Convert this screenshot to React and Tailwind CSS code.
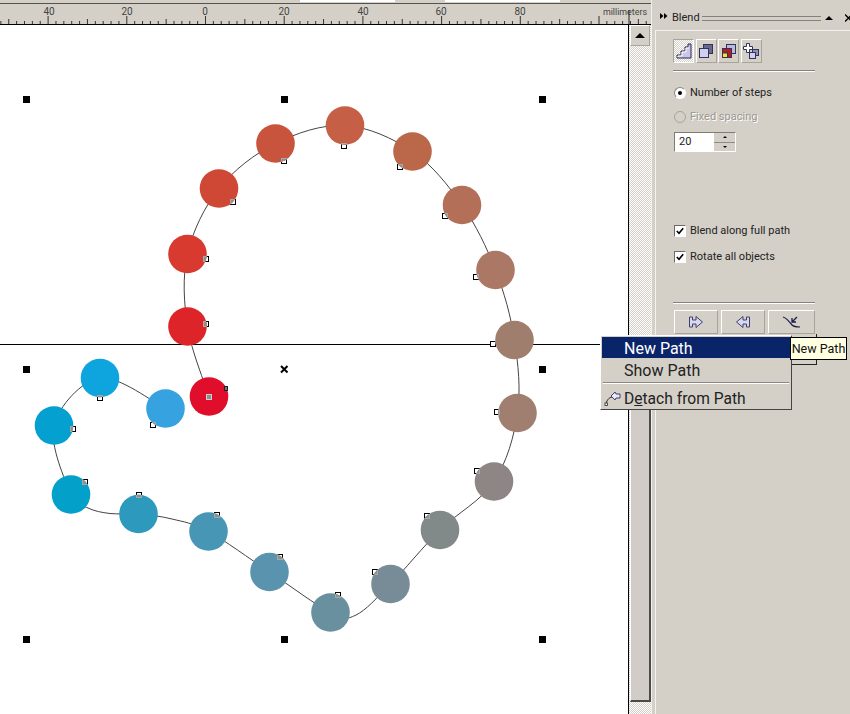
import React from "react";

const blobs = [
  { c: [209, 396.5], f: "#e00d2b", h: [[209, 397, 1]] },
  { c: [187.5, 326.5], f: "#dd2429", h: [[206, 324]] },
  { c: [187.5, 254], f: "#d83a30", h: [[206, 259]] },
  { c: [219, 188.5], f: "#cf4735", h: [[233, 202]] },
  { c: [275.5, 143.5], f: "#c9543e", h: [[284, 161]] },
  { c: [345, 125.5], f: "#c55f45", h: [[344, 146]] },
  { c: [412.5, 151.5], f: "#ba674a", h: [[400, 167]] },
  { c: [462, 205], f: "#b36f57", h: [[445, 216]] },
  { c: [495.5, 270], f: "#aa7864", h: [[476, 277]] },
  { c: [514.5, 340], f: "#a07e6e", h: [[493, 344]] },
  { c: [517.5, 413], f: "#a07f70", h: [[497, 412]] },
  { c: [494, 481.5], f: "#8e8585", h: [[477, 471]] },
  { c: [440, 530], f: "#828a89", h: [[427, 516]] },
  { c: [390.5, 584], f: "#778c97", h: [[375, 572]] },
  { c: [330.5, 612.5], f: "#69909f", h: [[338, 595]] },
  { c: [269.5, 572], f: "#5a93ad", h: [[280, 557]] },
  { c: [208.5, 531.5], f: "#4896b6", h: [[217, 515]] },
  { c: [138.5, 514], f: "#2d99bd", h: [[139, 495]] },
  { c: [71, 494.5], f: "#03a0c9", h: [[85, 482]] },
  { c: [54, 425.5], f: "#04a0d0", h: [[73, 429]] },
  { c: [100, 378], f: "#0ea5df", h: [[100, 398]] },
  { c: [165.5, 408.5], f: "#36a2df", h: [[153, 425]] },
];

const route = [
  [209, 396.5], [187.5, 326.5], [187.5, 254], [219, 188.5], [275.5, 143.5], [345, 125.5],
  [412.5, 151.5], [462, 205], [495.5, 270], [514.5, 340], [517.5, 413], [494, 481.5],
  [440, 530], [390.5, 584], [356, 615], [330.5, 612.5], [269.5, 572], [208.5, 531.5],
  [172, 519], [138.5, 514], [110, 513.5], [88, 508], [71, 494.5], [54, 425.5], [100, 378], [165.5, 408.5],
];

function smoothPath(pts) {
  let d = `M${pts[0][0]} ${pts[0][1]}`;
  for (let i = 0; i < pts.length - 1; i++) {
    const p0 = pts[Math.max(i - 1, 0)];
    const p1 = pts[i];
    const p2 = pts[i + 1];
    const p3 = pts[Math.min(i + 2, pts.length - 1)];
    const c1 = [p1[0] + (p2[0] - p0[0]) / 6, p1[1] + (p2[1] - p0[1]) / 6];
    const c2 = [p2[0] - (p3[0] - p1[0]) / 6, p2[1] - (p3[1] - p1[1]) / 6];
    d += ` C${c1[0]} ${c1[1]} ${c2[0]} ${c2[1]} ${p2[0]} ${p2[1]}`;
  }
  return d;
}

const corners = [
  [26, 99], [284, 99], [542, 99],
  [26, 369], [542, 369],
  [26, 639], [284, 639], [542, 639],
];

function Canvas() {
  return (
    <svg className="block" width="628" height="689" viewBox="0 25 628 689">
      <line x1="0" y1="344.5" x2="628" y2="344.5" stroke="#000" strokeWidth="1" />
      <path d={smoothPath(route)} fill="none" stroke="#444" strokeWidth="1" />
      {blobs.flatMap((b, i) =>
        b.h.map((h, j) => (
          <rect key={`u${i}${j}`} x={h[0] - 2.5} y={h[1] - 2.5} width="5" height="5" fill="#fff" stroke="#000" strokeWidth="1" />
        ))
      )}
      {blobs.map((b, i) => (
        <g key={i}>
          <clipPath id={`cp${i}`}>
            <circle cx={b.c[0]} cy={b.c[1]} r="19.3" />
          </clipPath>
          <circle cx={b.c[0]} cy={b.c[1]} r="19.3" fill={b.f} />
          {b.h.map((h, j) => (
            <rect
              key={j}
              x={h[0] - 2.5}
              y={h[1] - 2.5}
              width="5"
              height="5"
              fill="#8f8f8f"
              stroke={h[2] ? "#cfcfcf" : "#a8a8a8"}
              strokeWidth="1"
              clipPath={`url(#cp${i})`}
            />
          ))}
        </g>
      ))}
      <rect x="224.5" y="386.5" width="3" height="4" fill="#777" stroke="#222" strokeWidth="1" />
      {corners.map((p, i) => (
        <rect key={i} x={p[0] - 3} y={p[1] - 3} width="7" height="7" fill="#000" />
      ))}
      <path d="M281 366 L287.5 372.5 M287.5 366 L281 372.5" stroke="#000" strokeWidth="2" />
    </svg>
  );
}

function Ruler() {
  const ticks = [];
  for (let k = -26; k <= 56; k++) {
    const x = 205.5 + k * 7.87;
    const h = k % 10 === 0 ? 8 : k % 5 === 0 ? 5 : 3;
    ticks.push(<line key={k} x1={x} x2={x} y1={24 - h} y2="24" stroke="#333" strokeWidth="1" />);
  }
  const labels = [[49, "40"], [127, "20"], [205, "0"], [284, "20"], [363, "40"], [441, "60"], [520, "80"]];
  return (
    <svg className="block" width="651" height="20" viewBox="0 4 651 20">
      {ticks}
      {labels.map(([x, t]) => (
        <text key={x} x={x} y="15" textAnchor="middle" fontSize="10" fill="#444" fontFamily="Roboto,sans-serif">{t}</text>
      ))}
      <text x="647" y="15" textAnchor="end" fontSize="8.9" fill="#444" fontFamily="Roboto,sans-serif">millimeters</text>
      <line x1="629" x2="629" y1="10" y2="24" stroke="#222" />
    </svg>
  );
}

const raised = "border border-t-white border-l-white border-r-[#a8a49c] border-b-[#a8a49c]";

function StepsIcon() {
  return (
    <svg width="16" height="16" viewBox="0 0 16 16">
      <path d="M1 15 V12 H5 V8 H9 V4 H12 V1 H15 V15 Z" fill="#c9c6e6" stroke="#2b2b4f" strokeWidth="1" />
      <path d="M2 14 V13 H6 V9 H10 V5 H13" fill="none" stroke="#fff" strokeWidth="1" />
    </svg>
  );
}
function BackIcon() {
  return (
    <svg width="16" height="16" viewBox="0 0 16 16">
      <rect x="5.5" y="1.5" width="9" height="9" fill="#66668e" stroke="#33335a" />
      <rect x="1.5" y="5.5" width="9" height="9" fill="#cfcff2" stroke="#33335a" />
    </svg>
  );
}
function ColorIcon() {
  return (
    <svg width="16" height="16" viewBox="0 0 16 16">
      <rect x="5.5" y="1.5" width="9" height="9" fill="#b9b9dd" stroke="#33335a" />
      <rect x="1.5" y="5.5" width="9" height="9" fill="#b01c20" stroke="#33335a" />
      <rect x="1.5" y="10" width="5" height="4.5" fill="#f4e32a" stroke="#33335a" />
    </svg>
  );
}
function SplitIcon() {
  return (
    <svg width="18" height="18" viewBox="0 0 18 18">
      <path d="M4.5 1.5 H7.5 V4.5 H10.5 V7.5 H7.5 V10.5 H4.5 V7.5 H1.5 V4.5 H4.5 Z" fill="#fff" stroke="#33335a" />
      <rect x="10.5" y="7.5" width="6" height="6" fill="#8f8fb8" stroke="#33335a" />
      <rect x="7.5" y="10.5" width="6" height="6" fill="#cfcff2" stroke="#33335a" />
    </svg>
  );
}
function ArrowStart() {
  return (
    <svg width="16" height="14" viewBox="0 0 16 14">
      <path d="M1.5 2 H4.5 V5 H8 V1.5 L14.5 7 L8 12.5 V9 H4.5 V12 H1.5 Z" fill="#d8d8f2" stroke="#3f3f6e" />
    </svg>
  );
}
function ArrowEnd() {
  return (
    <svg width="16" height="14" viewBox="0 0 16 14">
      <path d="M14.5 2 H11.5 V5 H8 V1.5 L1.5 7 L8 12.5 V9 H11.5 V12 H14.5 Z" fill="#d8d8f2" stroke="#3f3f6e" />
    </svg>
  );
}
function PathArrow() {
  return (
    <svg width="20" height="14" viewBox="0 0 20 14">
      <path d="M1 2 C5 3 7 7 10 10 C12 12 15 12 18 12" fill="none" stroke="#1c1c4a" strokeWidth="1.2" />
      <path d="M15 2 L10 7 M10 3 V7 H14" fill="none" stroke="#1c1c4a" strokeWidth="1.3" />
    </svg>
  );
}
function DetachIcon() {
  return (
    <svg width="18" height="18" viewBox="0 0 18 18">
      <path d="M2 15 C3 10 6 8 9 8" fill="none" stroke="#222" strokeWidth="1" />
      <rect x="1" y="14" width="2.5" height="2.5" fill="#fff" stroke="#222" strokeWidth="0.8" />
      <path d="M7 7 L11 3 L12 5 H16 V9 H12 L11 11 Z" fill="#e9e9f7" stroke="#3f3f6e" strokeWidth="1" />
    </svg>
  );
}

function Radio({ on, disabled }) {
  return (
    <span className={`w-[12px] h-[12px] rounded-full border flex items-center justify-center ${disabled ? "border-[#a8a49c] bg-[#d4d0c8]" : "border-t-[#8a877f] border-l-[#8a877f] border-r-white border-b-white bg-white"}`}>
      {on && <span className="w-[4px] h-[4px] rounded-full bg-black" />}
    </span>
  );
}

function Check() {
  return (
    <span className="w-[12px] h-[12px] bg-white border border-t-[#6e6b64] border-l-[#6e6b64] border-r-white border-b-white flex items-center justify-center">
      <svg width="8" height="8" viewBox="0 0 8 8">
        <path d="M0.8 4 L3 6.3 L7.2 1.2" fill="none" stroke="#000" strokeWidth="1.6" />
      </svg>
    </span>
  );
}

const hatch = "bg-[repeating-conic-gradient(#d4d0c8_0_25%,#fff_0_50%)] bg-[length:2px_2px]";

export default function App() {
  return (
    <div className="relative w-[850px] h-[714px] overflow-hidden flex bg-[#d4d0c8] text-[11px] text-[#222] font-['Roboto',sans-serif]">
      <div className="w-[651px] h-full flex flex-col shrink-0">
        <div className="h-[4px] bg-[#d4d0c8] border-b border-[#55534e] flex">
          <div className="ml-[300px] w-[95px] h-[2px] bg-white" />
          <div className="ml-[50px] w-[115px] h-[2px] bg-white" />
        </div>
        <div className="h-[20px] bg-[#d4d0c8]">
          <Ruler />
        </div>
        <div className="flex-1 min-h-0 flex border-t border-black">
          <div className="w-[628px] bg-white h-full">
            <Canvas />
          </div>
          <div className={`w-[23px] h-full flex flex-col border-l border-black ${hatch}`}>
            <div className={`ml-[1px] w-[20px] h-[21px] bg-[#d4d0c8] flex items-center justify-center ${raised}`}>
              <span className="w-0 h-0 border-l-[5px] border-r-[5px] border-b-[5px] border-l-transparent border-r-transparent border-b-black" />
            </div>
            <div className="h-[315px]" />
            <div className="ml-[1px] w-[21px] h-[341px] bg-[#d1ccc7] border-l border-white border-r-2 border-b-2 border-r-[#4c4a46] border-b-[#4c4a46]" />
          </div>
        </div>
      </div>

      <div className="flex-1 flex flex-col border-l border-[#f2f0ec] overflow-hidden">
        <div className="h-[24px] mt-[6px] flex items-center">
          <svg className="ml-[8px] mb-[4px] shrink-0" width="8" height="6" viewBox="0 0 8 6">
            <path d="M0 0 L3.5 3 L0 6 Z M4 0 L7.5 3 L4 6 Z" fill="#000" />
          </svg>
          <span className="ml-[4px] text-[11px] w-[26px]">Blend</span>
          <div className="ml-[4px] w-[119px] h-[5px] border-y border-[#85827a] shrink-0" />
          <span className="ml-[4px] shrink-0 w-0 h-0 border-l-[4px] border-r-[4px] border-b-[4px] border-l-transparent border-r-transparent border-b-black" />
          <svg className="ml-[12px] shrink-0" width="6" height="8" viewBox="0 0 6 8">
            <path d="M0 0.5 L6 6.5 M0 7.5 L6 1.5" stroke="#000" strokeWidth="1.4" />
          </svg>
        </div>
        <div className="ml-[3px] flex-1 border-l border-t border-[#f4f2ee] pl-[17px]">
          <div className="mt-[8px] flex gap-[1.5px] h-[24px]">
            <div className={`w-[21px] flex items-center justify-center ${hatch} border border-t-[#a8a49c] border-l-[#a8a49c] border-r-white border-b-white`}><StepsIcon /></div>
            <div className={`w-[21px] flex items-center justify-center ${raised}`}><BackIcon /></div>
            <div className={`w-[21px] flex items-center justify-center ${raised}`}><ColorIcon /></div>
            <div className={`w-[21px] flex items-center justify-center ${raised}`}><SplitIcon /></div>
          </div>
          <div className="mt-[7px] w-[142px] h-[2px] border-t border-[#85827a] border-b border-b-white" />

          <div className="mt-[13px] h-[16px] flex items-center gap-[4px] pl-[1px]">
            <Radio on />
            <span>Number of steps</span>
          </div>
          <div className="mt-[8px] h-[16px] flex items-center gap-[4px] pl-[1px]">
            <Radio disabled />
            <span className="text-[#9b988f] [text-shadow:1px_1px_0_#fff]">Fixed spacing</span>
          </div>
          <div className="mt-[7px] ml-[1px] w-[62px] h-[20px] bg-white border border-t-[#7f7c75] border-l-[#7f7c75] border-r-white border-b-white flex items-center">
            <span className="ml-[4px] w-[35px]">20</span>
            <div className="w-[21px] h-[18px] flex flex-col gap-[1px] bg-[#8f8c85]">
              <div className="flex-1 bg-[#d4d0c8] flex items-center justify-center"><span className="w-0 h-0 border-l-[2px] border-r-[2px] border-b-[2px] border-l-transparent border-r-transparent border-b-black" /></div>
              <div className="flex-1 bg-[#d4d0c8] flex items-center justify-center"><span className="w-0 h-0 border-l-[2px] border-r-[2px] border-t-[2px] border-l-transparent border-r-transparent border-t-black" /></div>
            </div>
          </div>

          <div className="mt-[71px] h-[16px] flex items-center gap-[4px] pl-[1px]">
            <Check />
            <span>Blend along full path</span>
          </div>
          <div className="mt-[10px] h-[16px] flex items-center gap-[4px] pl-[1px]">
            <Check />
            <span>Rotate all objects</span>
          </div>

          <div className="mt-[37px] w-[142px] h-[2px] border-t border-[#85827a] border-b border-b-white" />
          <div className="mt-[6px] ml-[1px] flex gap-[3px] h-[24px]">
            <div className={`w-[44px] flex items-center justify-center ${raised}`}><ArrowStart /></div>
            <div className={`w-[44px] flex items-center justify-center ${raised}`}><ArrowEnd /></div>
            <div className={`w-[47px] flex items-center justify-center ${raised}`}><PathArrow /></div>
          </div>
          <div className="ml-[97px] w-[47px] h-[31px] border-r border-b border-[#222]" />
        </div>
      </div>

      {/* context menu */}
      <div className="absolute left-[600px] top-[335px] w-[192px] h-[75px] bg-[#d4d0c8] border border-t-white border-l-white border-r-[#444] border-b-[#444] p-[1px] text-[16px] leading-[22px] text-[#222]">
        <div className="h-[21px] pt-[1px] bg-[#0a246a] text-white pl-[22px]">New Path</div>
        <div className="h-[22px] pt-[1px] mt-[1px] pl-[22px]">Show Path</div>
        <div className="mt-[1px] mx-[1px] h-[2px] border-t border-[#8a877f] border-b border-b-white" />
        <div className="h-[24px] mt-[2px] flex items-center">
          <span className="ml-[2px] w-[20px]"><DetachIcon /></span>
          <span className="pt-[1px] text-[15.6px]">D<span className="underline">e</span>tach from Path</span>
        </div>
      </div>

      {/* tooltip */}
      <div className="absolute left-[790px] top-[337px] w-[57px] h-[23px] bg-[#ffffe1] border border-black text-[12.5px] leading-[21px] text-center text-[#111] whitespace-nowrap">New Path</div>
    </div>
  );
}
